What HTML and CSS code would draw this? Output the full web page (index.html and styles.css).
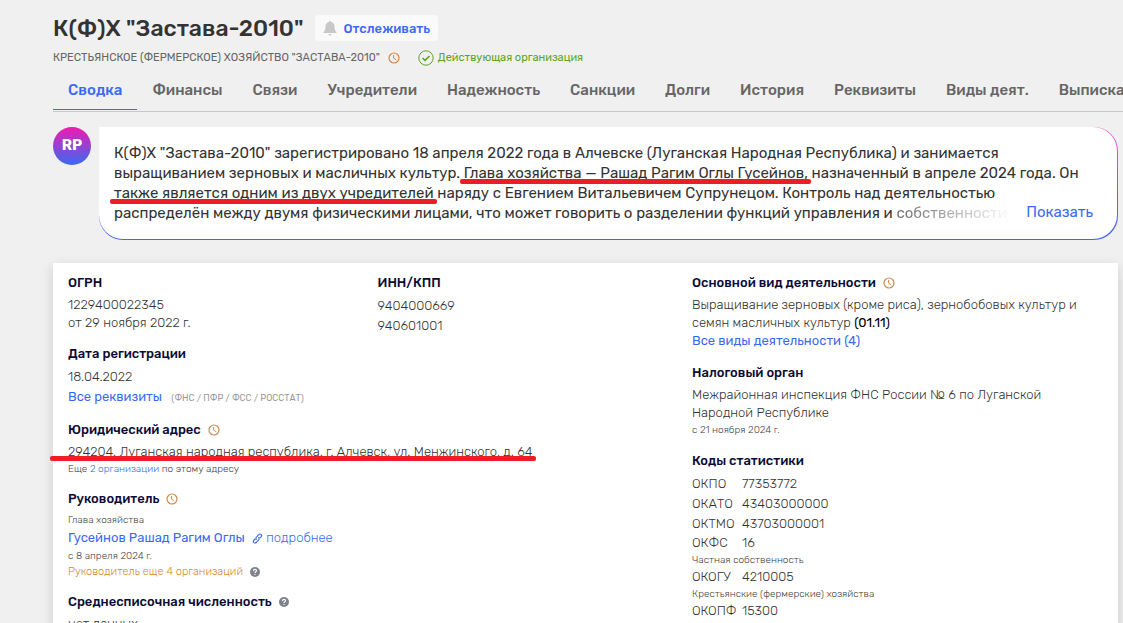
FILE: index.html
```html
<!DOCTYPE html>
<html lang="ru">
<head>
    <meta charset="UTF-8">
    <meta name="viewport" content="width=device-width, initial-scale=1.0">
    <title>К(Ф)Х "Застава-2010"</title>
    <link rel="stylesheet" href="styles.css">
</head>
<body>
    <!-- Shared icons -->
    <svg class="sprite" aria-hidden="true">
        <symbol id="icon-clock" viewBox="0 0 12 12">
            <circle cx="6" cy="6" r="5" fill="none" stroke="currentColor" stroke-width="1.2"/>
            <path d="M5.6 3v3.2l2.6 1.6" fill="none" stroke="currentColor"/>
        </symbol>
        <symbol id="icon-help" viewBox="0 0 10 10">
            <circle cx="5" cy="5" r="5" fill="currentColor"/>
            <path d="M3.5 3.9c0-2 3-2 3-.2 0 1.1-1.5 1.1-1.5 2.3M5 7v1" fill="none" stroke="#fff" stroke-width="1.1"/>
        </symbol>
    </svg>

    <header class="page-header">
        <div class="title-row">
            <h1>К(Ф)Х "Застава-2010"</h1>
            <button type="button" class="follow-btn">
                <svg width="14" height="15" viewBox="0 0 13 15" aria-hidden="true">
                    <path fill="#c8c8c8" d="M6.500 0c.7 0 1 .5 1 1.100C9.800 1.600 11 3.300 11 5.500c0 3.500.8 4.500 2 5.500v1H0v-1c1.200-1 2-2 2-5.500 0-2.200 1.200-3.900 3.500-4.400C5.500.5 5.800 0 6.500 0zM5 13h3c0 2-3 2-3 0z"/>
                </svg>
                Отслеживать
            </button>
        </div>
        <div class="status-row">
            <span class="full-name">КРЕСТЬЯНСКОЕ (ФЕРМЕРСКОЕ) ХОЗЯЙСТВО "ЗАСТАВА-2010"</span>
            <svg class="icon-clock"><use href="#icon-clock"/></svg>
            <span class="status">
                <svg width="16" height="16" viewBox="0 0 16 16" aria-hidden="true">
                    <circle cx="8" cy="8" r="7.200" fill="none" stroke="currentColor"/>
                    <path d="M4.500 8l2.500 2.300 4.500-4.300" fill="none" stroke="currentColor" stroke-width="1.600"/>
                </svg>
                Действующая организация
            </span>
        </div>
    </header>

    <nav class="tabs">
        <a href="#" class="active">Сводка</a>
        <a href="#">Финансы</a>
        <a href="#">Связи</a>
        <a href="#">Учредители</a>
        <a href="#">Надежность</a>
        <a href="#">Санкции</a>
        <a href="#">Долги</a>
        <a href="#">История</a>
        <a href="#">Реквизиты</a>
        <a href="#">Виды деят.</a>
        <a href="#">Выписка</a>
    </nav>

    <main>
        <section class="summary">
            <div class="avatar">RP</div>
            <div class="summary-frame">
                <div class="summary-box">
                    <p>
                        К(Ф)Х "Застава-2010" зарегистрировано 18 апреля 2022 года в Алчевске (Луганская Народная Республика) и занимается<br>
                        выращиванием зерновых и масличных культур. <span class="marked">Глава хозяйства — Рашад Рагим Оглы Гусейнов,</span> назначенный в апреле 2024 года. Он<br>
                        <span class="marked">также является одним из двух учредителей</span> наряду с Евгением Витальевичем Супрунецом. Контроль над деятельностью<br>
                        распределён между двумя физическими лицами, что может говорить о разделении функций управления и <span class="faded">собственности.</span>
                    </p>
                    <a href="#" class="show-more">Показать</a>
                </div>
            </div>
        </section>

        <section class="card">
            <div class="col-main">
                <div class="col-pair">
                    <div>
                        <div class="block">
                            <h2>ОГРН</h2>
                            <p>1229400022345<br>от 29 ноября 2022 г.</p>
                        </div>
                        <div class="block">
                            <h2>Дата регистрации</h2>
                            <p class="roomy">18.04.2022<br><a href="#">Все реквизиты</a> <span class="funds">(ФНС / ПФР / ФСС / РОССТАТ)</span></p>
                        </div>
                    </div>
                    <div class="block">
                        <h2>ИНН/КПП</h2>
                        <p class="roomy">9404000669<br>940601001</p>
                    </div>
                </div>
                <div class="block">
                    <h2>Юридический адрес <svg class="icon-clock"><use href="#icon-clock"/></svg></h2>
                    <p><span class="marked address">294204, Луганская народная республика, г. Алчевск, ул. Менжинского, д. 64</span></p>
                    <p class="note">Еще <a href="#">2 организации</a> по этому адресу</p>
                </div>
                <div class="block">
                    <h2>Руководитель <svg class="icon-clock"><use href="#icon-clock"/></svg></h2>
                    <p class="note">Глава хозяйства</p>
                    <p class="roomy">
                        <a href="#">Гусейнов Рашад Рагим Оглы</a>
                        <a href="#" class="details"><svg width="11" height="11" viewBox="0 0 12 12" aria-hidden="true"><path d="M5 7.500C3.600 6 4 5.200 5 4.200l2.200-2.300c2-2 4.400.4 2.700 2.400L8.500 5.700M7 4.500c1.400 1.500 1 2.300 0 3.300l-2.200 2.300c-2 2-4.400-.4-2.700-2.400l1.400-1.400" fill="none" stroke="currentColor" stroke-width="1.200"/></svg> подробнее</a>
                    </p>
                    <p class="note">с 8 апреля 2024 г.</p>
                    <p class="note warning">Руководитель еще 4 организаций <svg class="icon-help"><use href="#icon-help"/></svg></p>
                </div>
                <div class="block">
                    <h2>Среднесписочная численность <svg class="icon-help"><use href="#icon-help"/></svg></h2>
                    <p>нет данных</p>
                </div>
            </div>

            <div class="col-side">
                <div class="block">
                    <h2>Основной вид деятельности <svg class="icon-clock"><use href="#icon-clock"/></svg></h2>
                    <p>Выращивание зерновых (кроме риса), зернобобовых культур и<br>семян масличных культур <span class="code">(01.11)</span><br><a href="#">Все виды деятельности (4)</a></p>
                </div>
                <div class="block">
                    <h2>Налоговый орган</h2>
                    <p>Межрайонная инспекция ФНС России № 6 по Луганской<br>Народной Республике</p>
                    <p class="note">с 21 ноября 2024 г.</p>
                </div>
                <div class="block">
                    <h2>Коды статистики</h2>
                    <table class="codes">
                        <tr class="tall"><th scope="row">ОКПО</th><td>77353772</td></tr>
                        <tr class="tall"><th scope="row">ОКАТО</th><td>43403000000</td></tr>
                        <tr class="tall"><th scope="row">ОКТМО</th><td>43703000001</td></tr>
                        <tr><th scope="row">ОКФС</th><td>16</td></tr>
                        <tr><td colspan="2" class="note">Частная собственность</td></tr>
                        <tr><th scope="row">ОКОГУ</th><td>4210005</td></tr>
                        <tr><td colspan="2" class="note">Крестьянские (фермерские) хозяйства</td></tr>
                        <tr><th scope="row">ОКОПФ</th><td>15300</td></tr>
                        <tr><td colspan="2" class="note">Крестьянские (фермерские) хозяйства</td></tr>
                    </table>
                </div>
            </div>
        </section>
    </main>
</body>
</html>
```
FILE: styles.css
```css
/* Reset and base styles */
* {
    box-sizing: border-box;
    margin: 0;
    padding: 0;
}

body {
    font-family: Rubik, Roboto, "Noto Sans", sans-serif;
    font-size: 13px;
    line-height: 18px;
    color: #333;
    background-color: #f0f0f0;
    overflow-x: hidden;
}

a {
    color: #3a6af2;
    text-decoration: none;
}

a:hover {
    text-decoration: underline;
}

.sprite {
    display: none;
}

.icon-clock {
    width: 12px;
    height: 12px;
    color: #d08a4e;
    flex-shrink: 0;
}

.icon-help {
    width: 10px;
    height: 10px;
    color: #7f828c;
}

/* Header */
.page-header {
    padding: 12px 0 0 53px;
}

.title-row {
    display: flex;
    align-items: center;
    gap: 12px;
    height: 32px;
}

h1 {
    font-size: 23px;
    line-height: 32px;
    font-weight: 500;
}

.follow-btn {
    display: flex;
    align-items: center;
    gap: 6px;
    height: 26px;
    padding: 0 8px;
    font-family: inherit;
    font-size: 13px;
    font-weight: 500;
    color: #3a6af2;
    background-color: #fafafa;
    border: none;
    border-radius: 4px;
    cursor: pointer;
}

.status-row {
    display: flex;
    align-items: center;
    gap: 8px;
    height: 26px;
    padding-top: 1px;
    font-size: 11px;
    color: #666;
}

.status {
    display: flex;
    align-items: center;
    gap: 4px;
    margin-left: 10px;
    color: #5fa321;
}

/* Tabs */
.tabs {
    display: flex;
    height: 42px;
    margin-left: 53px;
    overflow: hidden;
    white-space: nowrap;
    border-bottom: 1px solid #c8c8c8;
}

.tabs a {
    flex-shrink: 0;
    height: 40px;
    padding: 0 15px;
    font-size: 15px;
    line-height: 40px;
    font-weight: 500;
    color: #666;
}

.tabs a.active {
    color: #3a6af2;
    border-bottom: 1px solid #3a6af2;
}

main {
    padding: 15px 5px 0 53px;
}

/* Summary */
.summary {
    display: flex;
    align-items: flex-start;
    gap: 8px;
    margin-bottom: 23px;
}

.avatar {
    flex-shrink: 0;
    width: 38px;
    height: 38px;
    font-size: 15px;
    line-height: 36px;
    font-weight: 700;
    text-align: center;
    color: #fff;
    background: linear-gradient(#f01ab0, #3a6af2);
    border-radius: 50%;
}

/* gradient border shown through the 1px padding */
.summary-frame {
    flex: 1;
    min-width: 0;
    padding: 0 1px 1px 0;
    background: linear-gradient(#f25cc4, #a04fd6 50%, #3a6af2);
    border-radius: 0 24px 24px 24px;
}

.summary-box {
    position: relative;
    padding: 16px 0 16px 15px;
    overflow: hidden;
    background-color: #fff;
    border-radius: 0 24px 24px 24px;
}

.summary-box p {
    font-size: 15px;
    line-height: 20px;
    white-space: nowrap;
}

.faded {
    color: transparent;
    background: linear-gradient(to right, #666, #fff);
    background-clip: text;
    -webkit-background-clip: text;
}

.show-more {
    position: absolute;
    right: 24px;
    bottom: 16px;
    font-size: 15px;
    line-height: 22px;
}

/* Red marker line */
.marked {
    position: relative;
}

.marked::after {
    content: "";
    position: absolute;
    left: -4px;
    right: -3px;
    bottom: -2px;
    height: 5px;
    background-color: #ee1c25;
    border-radius: 2px;
}

.marked.address::after {
    left: -18px;
}

/* Card */
.card {
    display: grid;
    grid-template-columns: 3fr 2fr;
    padding: 10px 0;
    background-color: #fff;
    box-shadow: 0 4px 12px rgba(0, 0, 0, 0.15);
}

.col-main {
    padding: 0 5px 0 15px;
}

.col-pair {
    display: grid;
    grid-template-columns: 1fr 1fr;
}

.block {
    margin-bottom: 12px;
    font-weight: 300;
}

.col-side .block {
    margin-bottom: 13px;
}

.block h2 {
    display: flex;
    align-items: center;
    gap: 7px;
    margin-bottom: 3px;
    font-size: 13px;
    line-height: 20px;
    font-weight: 500;
    color: #0b0b35;
}

.block .roomy {
    line-height: 20px;
}

.block .note {
    font-size: 10px;
    line-height: 16px;
    color: #444;
}

.block .warning {
    display: flex;
    align-items: center;
    gap: 7px;
    font-size: 11px;
    color: #d98a1f;
}

.block a,
.code {
    font-weight: 400;
}

.block .note a,
.block .details {
    font-weight: 300;
}

.code {
    color: #000;
}

.funds {
    margin-left: 6px;
    font-size: 9px;
    font-weight: 400;
    color: #999;
}

.details {
    margin-left: 4px;
}

.details svg {
    vertical-align: -2px;
}

.codes {
    border-collapse: collapse;
}

.codes th {
    width: 50px;
    font-weight: 300;
    text-align: left;
}

.codes .tall {
    line-height: 20px;
}
```
